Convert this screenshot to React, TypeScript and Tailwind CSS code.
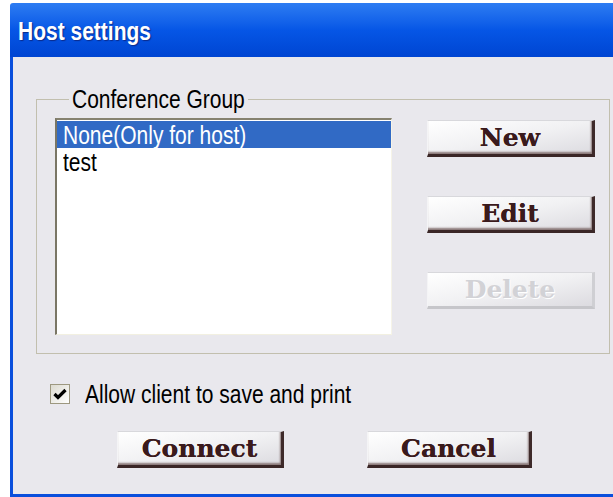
import React, { useState } from 'react';

const sans = "font-[family-name:'Liberation_Sans',Arial,sans-serif]";
const serif = "font-[family-name:'DejaVu_Serif','Liberation_Serif',serif]";

const groups = ['None(Only for host)', 'test'];

// Tall, narrow dialog lettering
const Tall: React.FC<{ children: React.ReactNode; className?: string }> = ({ children, className }) => (
    <span className={`inline-block scale-y-[1.22] ${sans} ${className ?? ''}`}>{children}</span>
);

const XpButton: React.FC<{ label: string; disabled?: boolean; className?: string }> = ({ label, disabled, className }) => (
    <button
        disabled={disabled}
        className={`flex items-center justify-center border-t border-l border-t-[#d8d8dc] border-l-[#f4f4f6] border-r-[3px] border-b-[3px] bg-linear-to-br from-white via-[#f1f1f3] to-[#dcdbe0] ${serif} font-bold text-[25px] leading-none ${
            disabled
                ? 'border-r-[#cfcfd3] border-b-[#c6c6ca] text-[#d2d2d6] [text-shadow:1px_1px_0_#ffffff]'
                : 'border-r-[#3e2a2a] border-b-[#3a2626] text-[#3a1a1c] shadow-[inset_-1px_-2px_2px_#8a7878] [text-shadow:0_0_0.4px_#3a1a1c]'
        } ${className ?? ''}`}
    >
        {label}
    </button>
);

const App: React.FC = () => {
    const [selected, setSelected] = useState(0);
    const [allowPrint, setAllowPrint] = useState(true);

    return (
        <div className="w-[613px] h-[497px] overflow-hidden bg-white pl-[10px] pt-[3px]">
            <div className="w-[640px] h-[494px] flex flex-col rounded-tl-[3px] overflow-hidden">
                {/* Title bar */}
                <div className="h-[54px] shrink-0 flex items-center pl-[8px] pt-[2px] bg-linear-to-b from-[#2d7cf2] via-[#0656e6] to-[#0045d2]">
                    <Tall className="font-bold text-[21px] text-white [text-shadow:1px_1px_1px_#0b2a8a]">Host settings</Tall>
                </div>

                {/* Dialog body */}
                <div className="flex-1 flex flex-col border-l-[3px] border-b-[3px] border-[#0a4fdc] bg-[#e9e8ed]">
                    <fieldset className="ml-[23px] mt-[29px] w-[574px] border border-[#c2bfae] pl-[18px] pr-[14px] pt-[5px] pb-[18px]">
                        <legend className="ml-[14px] px-[3px] leading-[26px]">
                            <Tall className="text-[21px] text-black">Conference Group</Tall>
                        </legend>
                        <div className="flex items-start">
                            <ul className="w-[337px] h-[217px] bg-white border-t-2 border-l-2 border-t-[#85816f] border-l-[#7a7665] border-r border-b border-r-[#f6f4e8] border-b-[#f2f0e1] pt-px">
                                {groups.map((g, i) => (
                                    <li
                                        key={g}
                                        onClick={() => setSelected(i)}
                                        className={`h-[27px] leading-[27px] pl-[6px] ${i === selected ? 'bg-[#316ac5] text-white' : 'text-black'}`}
                                    >
                                        <Tall className="text-[21px]">{g}</Tall>
                                    </li>
                                ))}
                            </ul>
                            <div className="ml-[35px] mt-[2px] flex flex-col gap-[39px]">
                                <XpButton label="New" className="w-[168px] h-[37px]" />
                                <XpButton label="Edit" className="w-[168px] h-[37px]" />
                                <XpButton label="Delete" disabled className="w-[168px] h-[37px]" />
                            </div>
                        </div>
                    </fieldset>

                    {/* Permission option */}
                    <label className="ml-[37px] mt-[27px] h-[26px] flex items-center gap-[15px] cursor-pointer">
                        <span
                            onClick={() => setAllowPrint(!allowPrint)}
                            className="w-[20px] h-[20px] flex items-center justify-center border border-[#9d9880] bg-linear-to-br from-[#dcdad0] to-white"
                        >
                            {allowPrint && (
                                <svg width="14" height="12" viewBox="0 0 14 12">
                                    <path d="M1.5 6 L5 9.5 L12.5 2" stroke="#000" strokeWidth="3.2" fill="none" />
                                </svg>
                            )}
                        </span>
                        <Tall className="text-[21px] text-black">Allow client to save and print</Tall>
                    </label>

                    <div className="ml-[104px] mt-[24px] flex gap-[83px]">
                        <XpButton label="Connect" className="w-[167px] h-[37px]" />
                        <XpButton label="Cancel" className="w-[165px] h-[37px]" />
                    </div>
                </div>
            </div>
        </div>
    );
};

export default App;
